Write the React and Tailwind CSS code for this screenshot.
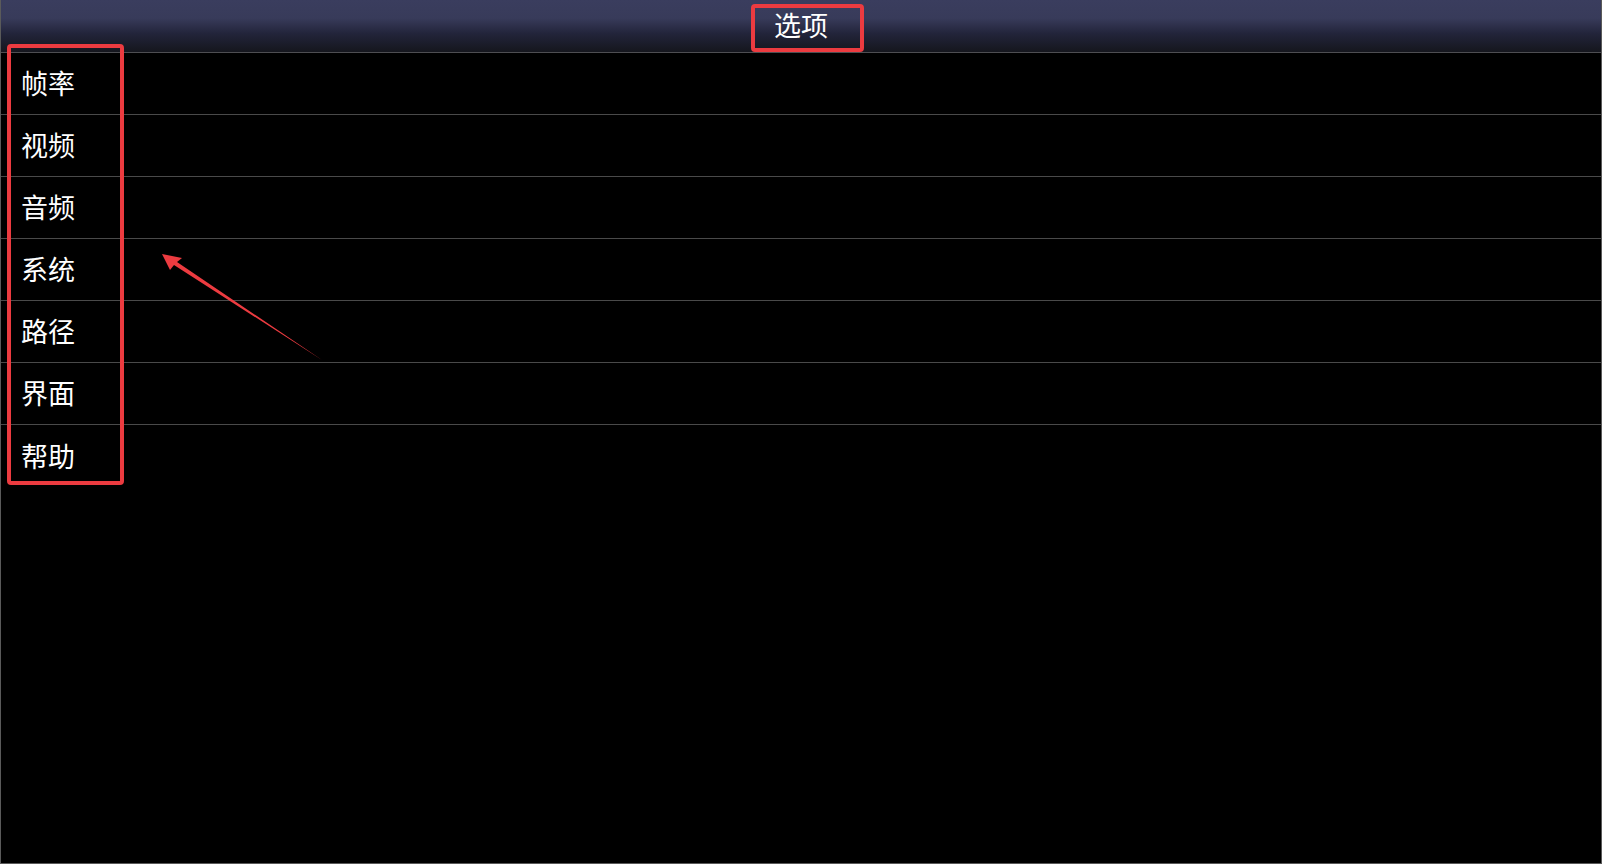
import React from "react";

const items = ["帧率", "视频", "音频", "系统", "路径", "界面", "帮助"];

export default function App() {
  return (
    <div
      className="relative w-[1602px] h-[864px] bg-black border-l border-r border-b border-[#5a5a5a] overflow-hidden"
      style={{ fontFamily: '"Noto Sans CJK SC", "Noto Sans", sans-serif' }}
    >
      <div className="h-[53px] border-b border-[#4e4e52] bg-[linear-gradient(to_bottom,#3a3d5e_0%,#383b5a_35%,#22243a_65%,#15161d_100%)] flex items-center justify-center">
        <span className="text-white text-[27px] leading-none pb-[4px]">选项</span>
      </div>
      <div className="flex flex-col">
        {items.map((t, i) => (
          <div
            key={t}
            className={`h-[62px] flex items-center pl-[20px] ${i < items.length - 1 ? "border-b border-[#4a4a4a]" : ""}`}
          >
            <span className="text-white text-[27px] leading-none pb-[2px]">{t}</span>
          </div>
        ))}
      </div>

      <div className="absolute left-[6px] top-[44px] w-[117px] h-[441px] border-[4px] border-[#ec3b40] rounded-[4px]" />
      <div className="absolute left-[750px] top-[4px] w-[113px] h-[48px] border-[4px] border-[#ec3b40] rounded-[4px]" />

      <svg className="absolute left-0 top-0" width="400" height="400" viewBox="0 0 400 400">
        <polygon
          points="161,254 181,258 176,262 321,360 173,265 169,270"
          fill="#ec3b40"
        />
      </svg>
    </div>
  );
}
